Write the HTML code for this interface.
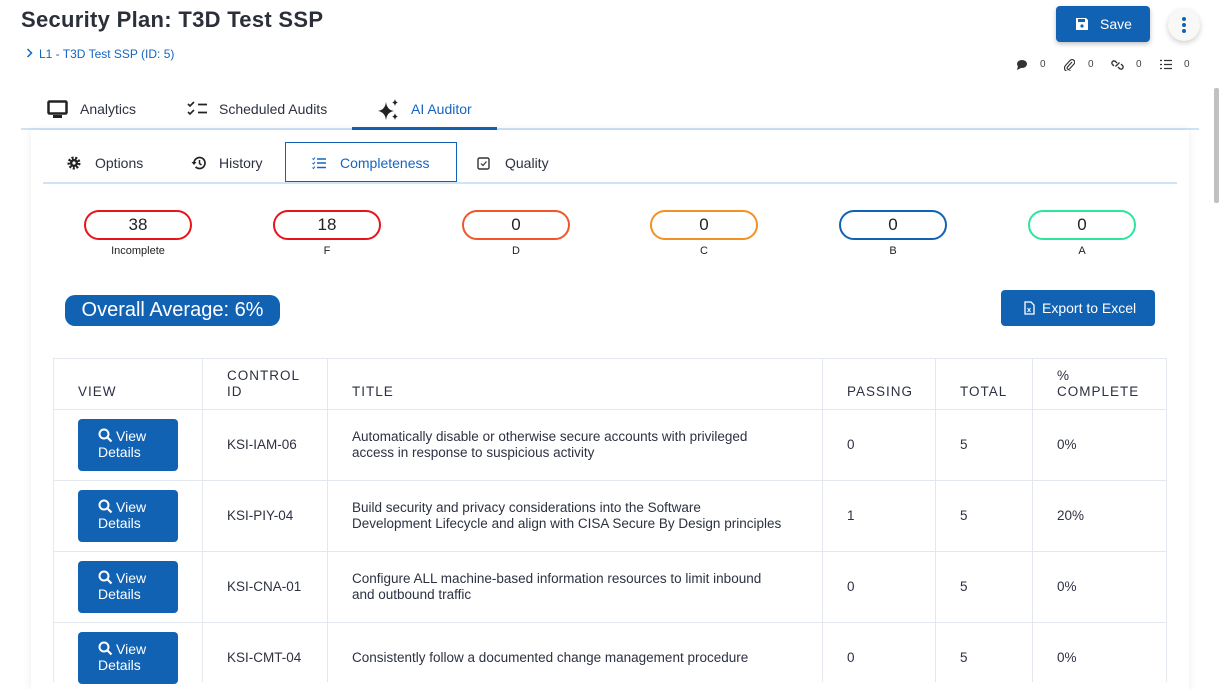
<!DOCTYPE html>
<html><head><meta charset="utf-8"><style>
*{box-sizing:border-box;margin:0;padding:0}
body{width:1229px;height:682px;overflow:hidden;background:#fff;font-family:"Liberation Sans",Arial,sans-serif;color:#2d3142;position:relative}
.a{position:absolute;white-space:nowrap}
.btn{position:absolute;background:#1262b3;color:#fff;border-radius:4px}
.pill{position:absolute;top:210px;width:108px;height:30px;border:2px solid;border-radius:15px;text-align:center;font-size:17px;line-height:26px;color:#222}
.lbl{position:absolute;top:245px;width:108px;text-align:center;font-size:11px;color:#222}
.vl{position:absolute;top:358px;height:324px;width:1px;background:#e3e8ef}
.hl{position:absolute;left:53px;width:1114px;height:1px;background:#e3e8ef}
.th{position:absolute;font-size:13.5px;letter-spacing:1px;color:#2d3142;line-height:16px}
.td{position:absolute;font-size:13.5px;line-height:16px;color:#2d3142}
.vd{position:absolute;left:78px;width:100px;height:52px;background:#1262b3;border-radius:4px;color:#fff;font-size:14px;line-height:16px;padding:9px 0 0 20px}
.vd svg{vertical-align:-2px;margin-right:3px}
.cnt{position:absolute;top:59px;font-size:10px;color:#444}
</style></head><body>
<div class="a" style="left:21px;top:7px;font-size:22px;font-weight:bold;color:#2b2f3a;letter-spacing:.3px">Security Plan: T3D Test SSP</div>
<svg class="a" style="left:26px;top:48px" width="7" height="10" viewBox="0 0 7 10"><path d="M1.5 1l4 4-4 4" fill="none" stroke="#1565c0" stroke-width="1.5"/></svg>
<div class="a" style="left:39px;top:47px;font-size:12px;color:#1565c0">L1 - T3D Test SSP (ID: 5)</div>
<div class="btn" style="left:1056px;top:6px;width:94px;height:36px;box-shadow:0 2px 5px rgba(0,0,0,.25)">
<svg class="a" style="left:19px;top:11px" width="14" height="14" viewBox="0 0 14 14"><path d="M1 1h10l2 2v10H1z" fill="#fff"/><rect x="3" y="2" width="7" height="3" fill="#1262b3"/><circle cx="7" cy="9" r="1.6" fill="#1262b3"/></svg>
<span class="a" style="left:44px;top:10px;font-size:14px">Save</span></div>
<div class="a" style="left:1168px;top:9px;width:32px;height:32px;border-radius:16px;background:#f8f8f6;box-shadow:0 2px 6px rgba(0,0,0,.2)">
<svg class="a" style="left:13px;top:7px" width="6" height="18"><circle cx="3" cy="3" r="2" fill="#1262b3"/><circle cx="3" cy="9" r="2" fill="#1262b3"/><circle cx="3" cy="15" r="2" fill="#1262b3"/></svg></div>
<svg class="a" style="left:1016px;top:59px" width="12" height="12" viewBox="0 0 12 12"><ellipse cx="6" cy="5" rx="5" ry="4" fill="#333"/><path d="M2 7l-1 4 4-2z" fill="#333"/></svg>
<div class="cnt" style="left:1040px">0</div>
<svg class="a" style="left:1064px;top:59px" width="11" height="12" viewBox="0 0 11 12"><path d="M8 3L3.5 8a1.3 1.3 0 0 0 2 2L10 5a2.5 2.5 0 0 0-4-3.5L1.5 6.5a3.5 3.5 0 0 0 5 5" fill="none" stroke="#333" stroke-width="1.2"/></svg>
<div class="cnt" style="left:1088px">0</div>
<svg class="a" style="left:1111px;top:59px" width="13" height="12" viewBox="0 0 13 12"><path d="M6 4L4.5 2.5a2 2 0 0 0-3 3L3 7M7 8l1.5 1.5a2 2 0 0 0 3-3L10 5M4.5 7.5l4-4" fill="none" stroke="#333" stroke-width="1.4"/></svg>
<div class="cnt" style="left:1136px">0</div>
<svg class="a" style="left:1160px;top:59px" width="12" height="11" viewBox="0 0 12 11"><path d="M4 1.5h8M4 5.5h8M4 9.5h8M0 1.5h2M0 5.5h2M0 9.5h2" stroke="#333" stroke-width="1.2"/></svg>
<div class="cnt" style="left:1184px">0</div>
<div class="a" style="left:1214px;top:88px;width:5px;height:115px;background:#c1c1c1;border-radius:2px"></div>
<!-- top tabs -->
<svg class="a" style="left:47px;top:100px" width="21" height="19" viewBox="0 0 21 19"><rect x="1.5" y="1.5" width="18" height="12" rx="1" fill="none" stroke="#222" stroke-width="2.5"/><rect x="6" y="15" width="9" height="3" fill="#222"/></svg>
<div class="a" style="left:80px;top:101px;font-size:14px">Analytics</div>
<svg class="a" style="left:187px;top:101px" width="21" height="15" viewBox="0 0 21 15"><path d="M1 3l2 2 4-4M1 11l2 2 4-4" fill="none" stroke="#222" stroke-width="1.6"/><path d="M11 3.5h9M11 11.5h9" stroke="#222" stroke-width="1.8"/></svg>
<div class="a" style="left:219px;top:101px;font-size:14px">Scheduled Audits</div>
<svg class="a" style="left:377px;top:99px" width="23" height="22" viewBox="0 0 23 22"><path d="M9 3Q10 11 17 12Q10 13 9 21Q8 13 1 12Q8 11 9 3z" fill="#222"/><path d="M18 0Q18.5 3 21 3.5Q18.5 4 18 7Q17.5 4 15 3.5Q17.5 3 18 0z" fill="#222"/><path d="M18 14Q18.5 17 21 17.5Q18.5 18 18 21Q17.5 18 15 17.5Q17.5 17 18 14z" fill="#222"/></svg>
<div class="a" style="left:411px;top:101px;font-size:14px;color:#1565c0">AI Auditor</div>
<div class="a" style="left:21px;top:128px;width:1178px;height:2px;background:#cfe3f7"></div>
<div class="a" style="left:352px;top:127px;width:145px;height:3px;background:#1262b3"></div>
<!-- card -->
<div class="a" style="left:31px;top:130px;width:1158px;height:560px;background:#fff;box-shadow:0 0 8px rgba(0,0,0,.08)"></div>
<svg class="a" style="left:67px;top:156px" width="14" height="14" viewBox="0 0 14 14"><circle cx="7" cy="7" r="5" fill="none" stroke="#222" stroke-width="3" stroke-dasharray="2 1.5"/><circle cx="7" cy="7" r="4" fill="#222"/><circle cx="7" cy="7" r="1.6" fill="#fff"/></svg>
<div class="a" style="left:95px;top:155px;font-size:14px">Options</div>
<svg class="a" style="left:191px;top:156px" width="15" height="14" viewBox="0 0 15 14"><path d="M3 7a5.5 5.5 0 1 1 1.6 3.9" fill="none" stroke="#222" stroke-width="1.7"/><path d="M0.5 6l2.5 3 2.5-3z" fill="#222"/><path d="M8.5 4v3.5l2 1.5" fill="none" stroke="#222" stroke-width="1.5"/></svg>
<div class="a" style="left:219px;top:155px;font-size:14px">History</div>
<div class="a" style="left:285px;top:142px;width:172px;height:42px;border:1px solid #1262b3;border-bottom:3px solid #1262b3"></div>
<svg class="a" style="left:312px;top:157px" width="14" height="12" viewBox="0 0 14 12"><path d="M0.5 1.5l1 1 1.5-2M0.5 6l1 1 1.5-2M0.5 10.5l1 1 1.5-2" fill="none" stroke="#1565c0" stroke-width="1"/><path d="M5 2h9M5 6h9M5 10.5h9" stroke="#1565c0" stroke-width="1.4"/></svg>
<div class="a" style="left:340px;top:155px;font-size:14px;color:#1565c0">Completeness</div>
<svg class="a" style="left:477px;top:157px" width="13" height="13" viewBox="0 0 13 13"><rect x="1" y="1" width="11" height="11" rx="1.5" fill="none" stroke="#333" stroke-width="1.4"/><path d="M4 6.5l2 2 3.5-4" fill="none" stroke="#333" stroke-width="1.2"/></svg>
<div class="a" style="left:505px;top:155px;font-size:14px">Quality</div>
<div class="a" style="left:43px;top:182px;width:1134px;height:2px;background:#cfe3f7"></div>
<!-- pills -->
<div class="pill" style="left:84px;border-color:#e8141c">38</div><div class="lbl" style="left:84px">Incomplete</div>
<div class="pill" style="left:273px;border-color:#e8141c">18</div><div class="lbl" style="left:273px">F</div>
<div class="pill" style="left:462px;border-color:#f0562a">0</div><div class="lbl" style="left:462px">D</div>
<div class="pill" style="left:650px;border-color:#f29224">0</div><div class="lbl" style="left:650px">C</div>
<div class="pill" style="left:839px;border-color:#1262b3">0</div><div class="lbl" style="left:839px">B</div>
<div class="pill" style="left:1028px;border-color:#2ee59c">0</div><div class="lbl" style="left:1028px">A</div>
<div class="a" style="left:65px;top:295px;width:215px;height:31px;background:#1262b3;border-radius:10px;color:#fff;font-size:20px;line-height:31px;text-align:center">Overall Average: 6%</div>
<div class="btn" style="left:1001px;top:290px;width:154px;height:36px">
<svg class="a" style="left:23px;top:11px" width="11" height="14" viewBox="0 0 11 14"><path d="M1 1h6l3 3v9H1z" fill="none" stroke="#fff" stroke-width="1.3"/><path d="M3.5 7l3 4M6.5 7l-3 4" stroke="#fff" stroke-width="1"/></svg>
<span class="a" style="left:41px;top:10px;font-size:14px">Export to Excel</span></div>
<!-- table -->
<div class="hl" style="top:358px"></div><div class="hl" style="top:409px"></div><div class="hl" style="top:480px"></div><div class="hl" style="top:551px"></div><div class="hl" style="top:622px"></div>
<div class="vl" style="left:53px"></div><div class="vl" style="left:202px"></div><div class="vl" style="left:327px"></div><div class="vl" style="left:822px"></div><div class="vl" style="left:935px"></div><div class="vl" style="left:1032px"></div><div class="vl" style="left:1166px"></div>
<div class="th" style="left:78px;top:384px">VIEW</div>
<div class="th" style="left:227px;top:368px">CONTROL<br>ID</div>
<div class="th" style="left:352px;top:384px">TITLE</div>
<div class="th" style="left:847px;top:384px">PASSING</div>
<div class="th" style="left:960px;top:384px">TOTAL</div>
<div class="th" style="left:1057px;top:368px">%<br>COMPLETE</div>

<div class="vd" style="top:419px"><svg width="15" height="15" viewBox="0 0 15 15"><circle cx="6" cy="6" r="4.5" fill="none" stroke="#fff" stroke-width="2"/><path d="M9.5 9.5l4 4" stroke="#fff" stroke-width="2.2"/></svg>View<br>Details</div>
<div class="td" style="left:227px;top:437px">KSI-IAM-06</div>
<div class="td" style="left:352px;top:429px">Automatically disable or otherwise secure accounts with privileged<br>access in response to suspicious activity</div>
<div class="td" style="left:847px;top:437px">0</div><div class="td" style="left:960px;top:437px">5</div><div class="td" style="left:1057px;top:437px">0%</div>

<div class="vd" style="top:490px"><svg width="15" height="15" viewBox="0 0 15 15"><circle cx="6" cy="6" r="4.5" fill="none" stroke="#fff" stroke-width="2"/><path d="M9.5 9.5l4 4" stroke="#fff" stroke-width="2.2"/></svg>View<br>Details</div>
<div class="td" style="left:227px;top:508px">KSI-PIY-04</div>
<div class="td" style="left:352px;top:500px">Build security and privacy considerations into the Software<br>Development Lifecycle and align with CISA Secure By Design principles</div>
<div class="td" style="left:847px;top:508px">1</div><div class="td" style="left:960px;top:508px">5</div><div class="td" style="left:1057px;top:508px">20%</div>

<div class="vd" style="top:561px"><svg width="15" height="15" viewBox="0 0 15 15"><circle cx="6" cy="6" r="4.5" fill="none" stroke="#fff" stroke-width="2"/><path d="M9.5 9.5l4 4" stroke="#fff" stroke-width="2.2"/></svg>View<br>Details</div>
<div class="td" style="left:227px;top:579px">KSI-CNA-01</div>
<div class="td" style="left:352px;top:571px">Configure ALL machine-based information resources to limit inbound<br>and outbound traffic</div>
<div class="td" style="left:847px;top:579px">0</div><div class="td" style="left:960px;top:579px">5</div><div class="td" style="left:1057px;top:579px">0%</div>

<div class="vd" style="top:632px"><svg width="15" height="15" viewBox="0 0 15 15"><circle cx="6" cy="6" r="4.5" fill="none" stroke="#fff" stroke-width="2"/><path d="M9.5 9.5l4 4" stroke="#fff" stroke-width="2.2"/></svg>View<br>Details</div>
<div class="td" style="left:227px;top:650px">KSI-CMT-04</div>
<div class="td" style="left:352px;top:650px">Consistently follow a documented change management procedure</div>
<div class="td" style="left:847px;top:650px">0</div><div class="td" style="left:960px;top:650px">5</div><div class="td" style="left:1057px;top:650px">0%</div>
</body></html>
